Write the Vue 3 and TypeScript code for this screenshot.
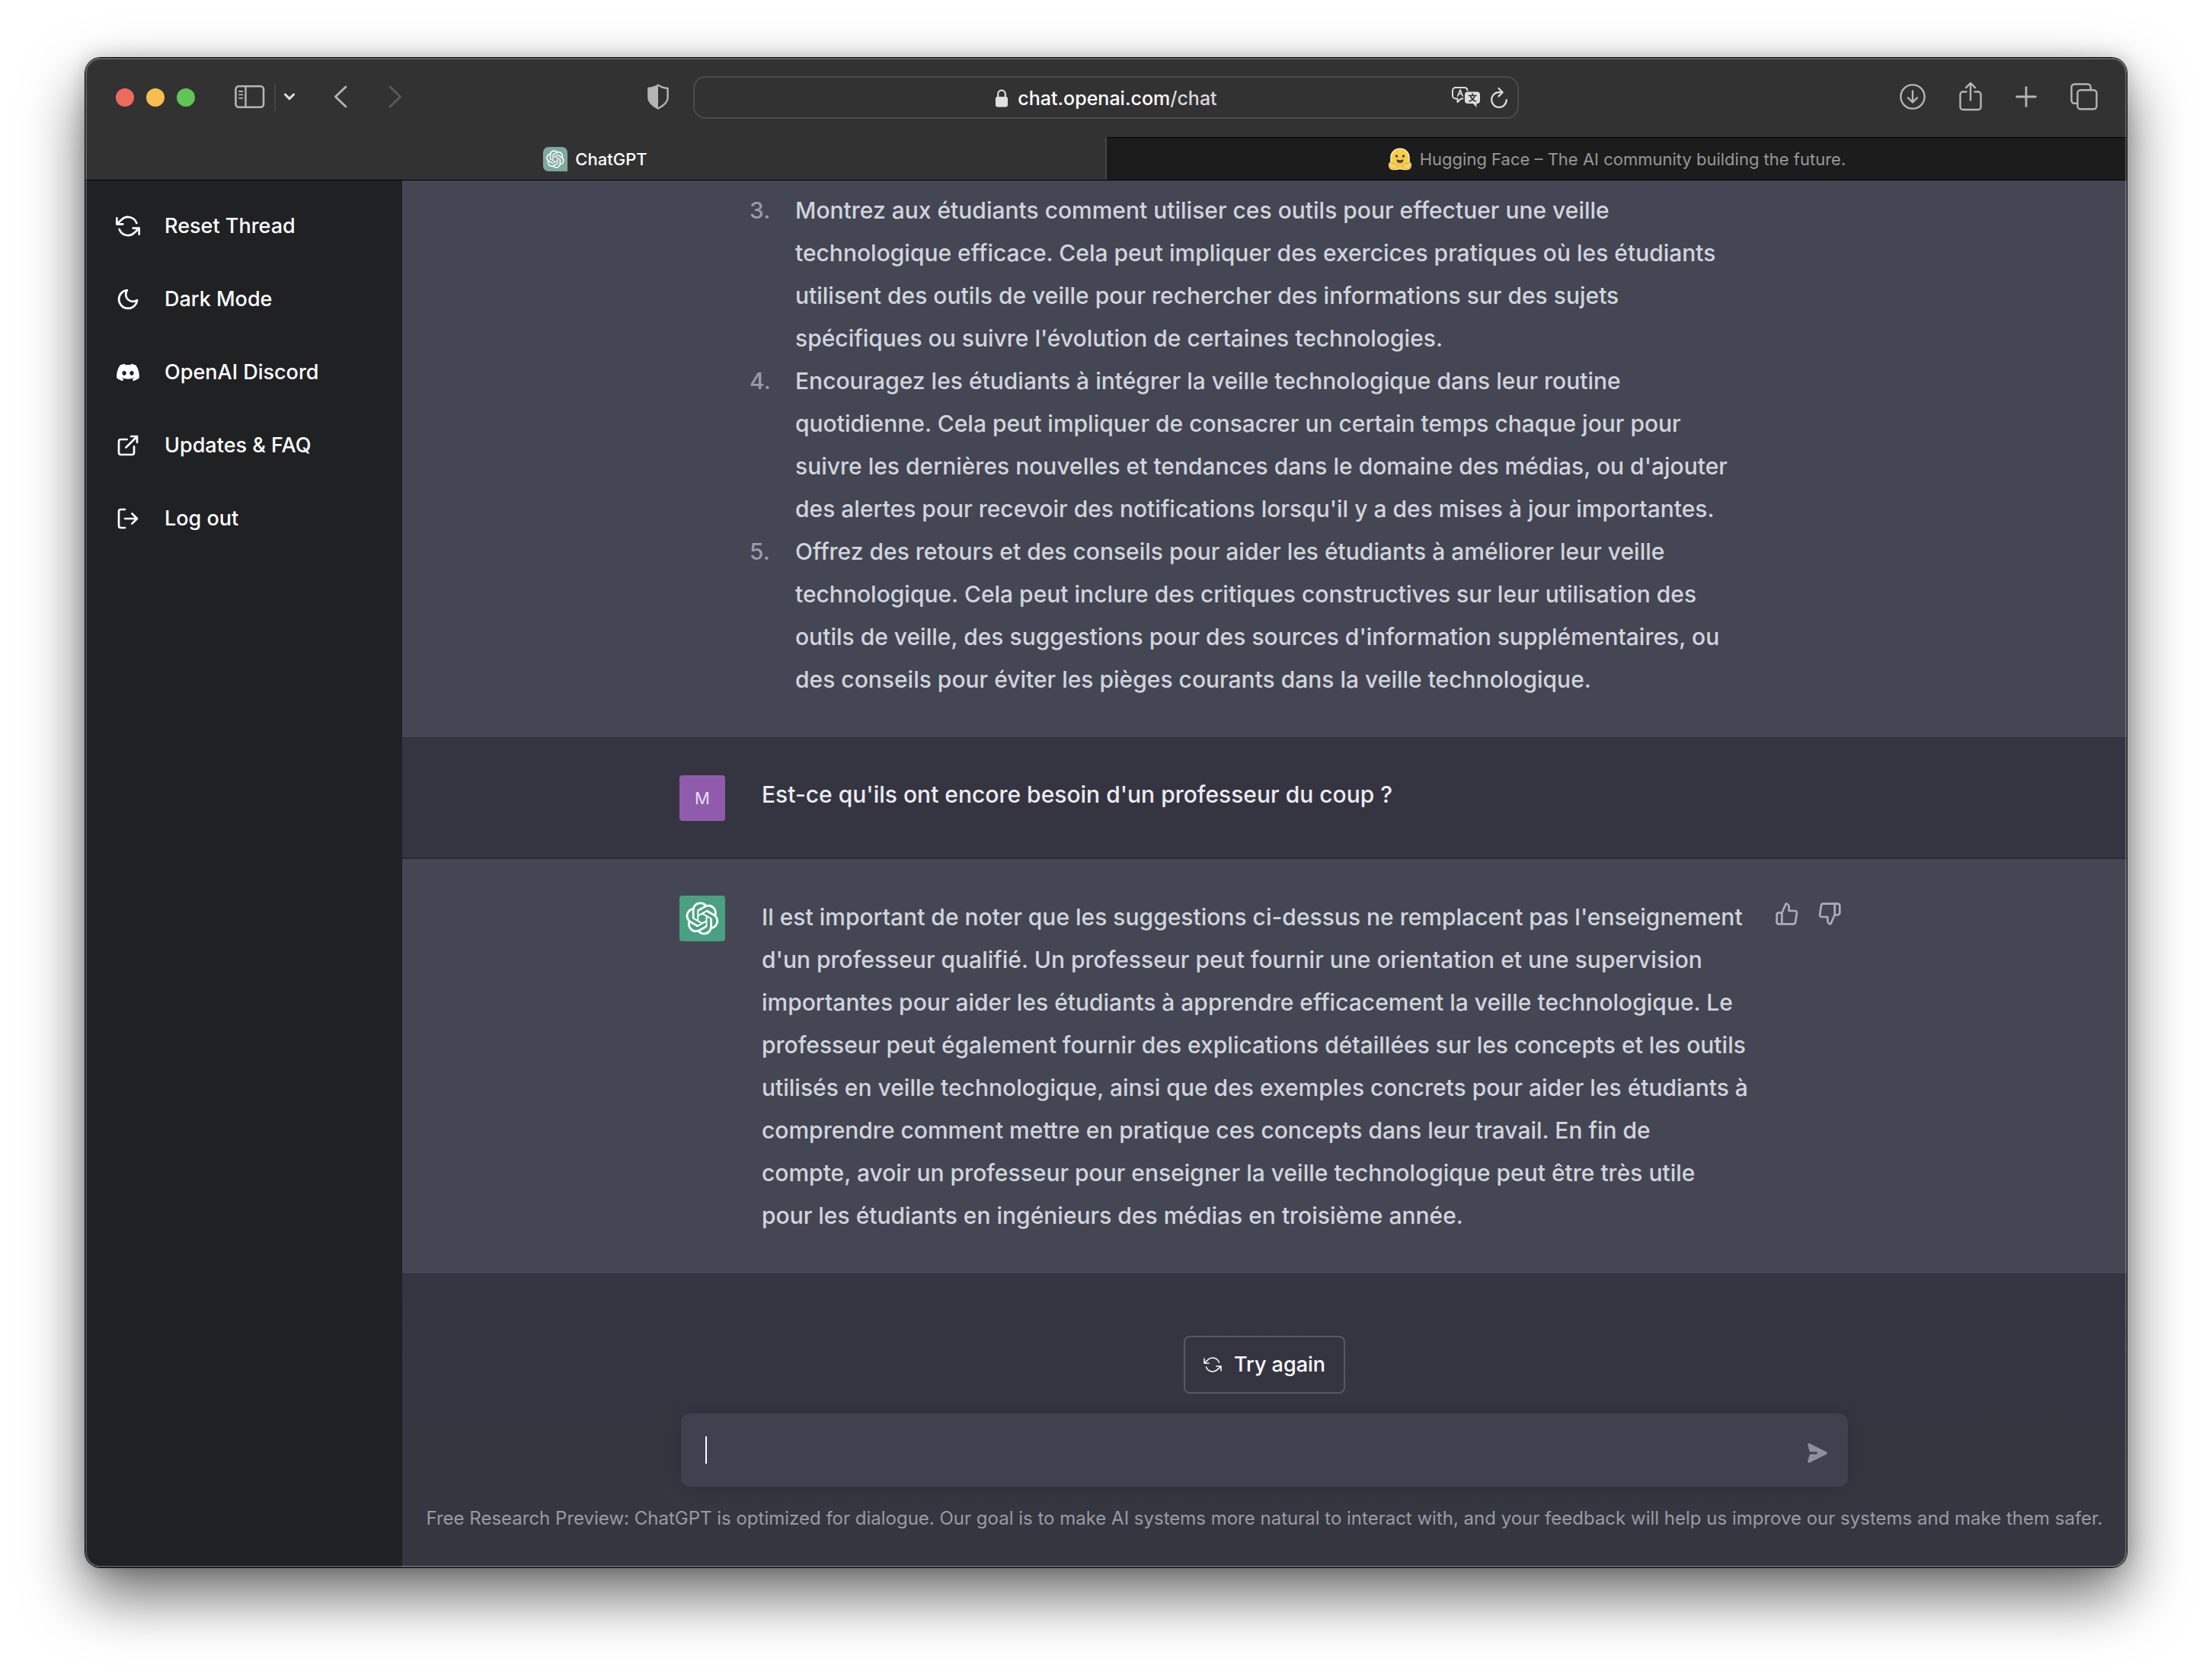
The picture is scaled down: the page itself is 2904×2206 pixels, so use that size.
<script setup lang="ts">
import { ref } from 'vue'

interface NavItem {
  label: string
  icon: 'refresh' | 'moon' | 'discord' | 'external' | 'logout'
}

interface Step {
  n: number
  lines: string[]
}

const draft = ref('')

const nav: NavItem[] = [
  { label: 'Reset Thread', icon: 'refresh' },
  { label: 'Dark Mode', icon: 'moon' },
  { label: 'OpenAI Discord', icon: 'discord' },
  { label: 'Updates & FAQ', icon: 'external' },
  { label: 'Log out', icon: 'logout' },
]

const steps: Step[] = [
  {
    n: 3,
    lines: [
      'Montrez aux étudiants comment utiliser ces outils pour effectuer une veille',
      'technologique efficace. Cela peut impliquer des exercices pratiques où les étudiants',
      'utilisent des outils de veille pour rechercher des informations sur des sujets',
      "spécifiques ou suivre l'évolution de certaines technologies.",
    ],
  },
  {
    n: 4,
    lines: [
      'Encouragez les étudiants à intégrer la veille technologique dans leur routine',
      'quotidienne. Cela peut impliquer de consacrer un certain temps chaque jour pour',
      "suivre les dernières nouvelles et tendances dans le domaine des médias, ou d'ajouter",
      "des alertes pour recevoir des notifications lorsqu'il y a des mises à jour importantes.",
    ],
  },
  {
    n: 5,
    lines: [
      'Offrez des retours et des conseils pour aider les étudiants à améliorer leur veille',
      'technologique. Cela peut inclure des critiques constructives sur leur utilisation des',
      "outils de veille, des suggestions pour des sources d'information supplémentaires, ou",
      'des conseils pour éviter les pièges courants dans la veille technologique.',
    ],
  },
]

const answer: string[] = [
  "Il est important de noter que les suggestions ci-dessus ne remplacent pas l'enseignement",
  "d'un professeur qualifié. Un professeur peut fournir une orientation et une supervision",
  'importantes pour aider les étudiants à apprendre efficacement la veille technologique. Le',
  'professeur peut également fournir des explications détaillées sur les concepts et les outils',
  'utilisés en veille technologique, ainsi que des exemples concrets pour aider les étudiants à',
  'comprendre comment mettre en pratique ces concepts dans leur travail. En fin de',
  'compte, avoir un professeur pour enseigner la veille technologique peut être très utile',
  'pour les étudiants en ingénieurs des médias en troisième année.',
]

const knot =
  'M37.532 16.87a9.963 9.963 0 0 0-.856-8.184 10.078 10.078 0 0 0-10.855-4.835A9.964 9.964 0 0 0 18.306.5a10.079 10.079 0 0 0-9.614 6.977 9.967 9.967 0 0 0-6.664 4.834 10.08 10.08 0 0 0 1.24 11.817 9.965 9.965 0 0 0 .856 8.185 10.079 10.079 0 0 0 10.855 4.835 9.965 9.965 0 0 0 7.516 3.35 10.078 10.078 0 0 0 9.617-6.981 9.967 9.967 0 0 0 6.663-4.834 10.079 10.079 0 0 0-1.243-11.813ZM22.498 37.886a7.474 7.474 0 0 1-4.799-1.735c.061-.033.168-.091.237-.134l7.964-4.6a1.294 1.294 0 0 0 .655-1.134V19.054l3.366 1.944a.12.12 0 0 1 .066.092v9.299a7.505 7.505 0 0 1-7.49 7.496ZM6.392 31.006a7.471 7.471 0 0 1-.894-5.023c.06.036.162.099.237.141l7.964 4.6a1.297 1.297 0 0 0 1.308 0l9.724-5.614v3.888a.12.12 0 0 1-.048.103l-8.051 4.649a7.504 7.504 0 0 1-10.24-2.744ZM4.297 13.62A7.469 7.469 0 0 1 8.2 10.333c0 .068-.004.19-.004.274v9.201a1.294 1.294 0 0 0 .654 1.132l9.723 5.614-3.366 1.944a.12.12 0 0 1-.114.01L7.04 23.856a7.504 7.504 0 0 1-2.743-10.237Zm27.658 6.437-9.724-5.615 3.367-1.943a.121.121 0 0 1 .113-.01l8.052 4.648a7.498 7.498 0 0 1-1.158 13.528v-9.476a1.293 1.293 0 0 0-.65-1.132Zm3.35-5.043c-.059-.037-.162-.099-.236-.141l-7.965-4.6a1.298 1.298 0 0 0-1.308 0l-9.723 5.614v-3.888a.12.12 0 0 1 .048-.103l8.05-4.645a7.497 7.497 0 0 1 11.135 7.763Zm-21.063 6.929-3.367-1.944a.12.12 0 0 1-.065-.092v-9.299a7.497 7.497 0 0 1 12.293-5.756 6.94 6.94 0 0 0-.236.134l-7.965 4.6a1.294 1.294 0 0 0-.654 1.132l-.006 11.225Zm1.829-3.943 4.33-2.501 4.332 2.5v5l-4.331 2.5-4.331-2.5V18Z'
</script>

<template>
  <div class="desktop">
    <div class="window">
      <header class="toolbar">
        <div class="tools-left">
          <div class="lights">
            <button class="light red" aria-label="Close"></button>
            <button class="light yellow" aria-label="Minimize"></button>
            <button class="light green" aria-label="Zoom"></button>
          </div>
          <div class="panel-group">
            <button class="tool" aria-label="Sidebar">
              <svg width="40" height="32" viewBox="0 0 40 32" fill="none" stroke="#b5b5b5">
                <rect x="1.5" y="2.2" width="36.5" height="27.6" rx="4" stroke-width="2.6" />
                <path d="M14.5 2v28" stroke-width="2.4" />
                <path d="M6 9h4.4M6 13.4h4.4M6 17.8h4.4" stroke-width="1.8" stroke-linecap="round" />
              </svg>
            </button>
            <span class="rule"></span>
            <button class="tool" aria-label="Tab groups">
              <svg width="16" height="12" viewBox="0 0 16 12" fill="none" stroke="#e2e2e2" stroke-width="3" stroke-linecap="round" stroke-linejoin="round">
                <path d="M2.4 3l5.6 5.6L13.6 3" />
              </svg>
            </button>
          </div>
          <div class="history">
            <button class="tool" aria-label="Back">
              <svg width="18" height="30" viewBox="0 0 18 30" fill="none" stroke="#b5b5b5" stroke-width="2.8" stroke-linecap="round" stroke-linejoin="round">
                <path d="M16 2L2.4 15 16 28" />
              </svg>
            </button>
            <button class="tool" aria-label="Forward">
              <svg width="18" height="30" viewBox="0 0 18 30" fill="none" stroke="#5a5a5a" stroke-width="2.8" stroke-linecap="round" stroke-linejoin="round">
                <path d="M2 2l13.6 13L2 28" />
              </svg>
            </button>
          </div>
          <button class="tool shield" aria-label="Privacy report">
            <svg width="28" height="34" viewBox="0 0 28 34">
              <path d="M14 1.6C11 4 6.5 5.3 1.4 6v12.5c0 6.500 6 10.500 12.600 14 6.600-3.500 12.600-7.500 12.600-14V6C21.500 5.300 17 4 14 1.600z" fill="none" stroke="#b5b5b5" stroke-width="2.4" stroke-linejoin="round" />
              <path d="M14 1.600C11 4 6.500 5.300 1.400 6v12.500c0 6.500 6 10.500 12.600 14z" fill="#b5b5b5" />
            </svg>
          </button>
        </div>
        <div class="address">
          <span></span>
          <div class="url">
            <svg width="18" height="24" viewBox="0 0 18 24">
              <path d="M4.200 11V6.500a4.800 4.800 0 0 1 9.600 0V11" fill="none" stroke="#e0e0e0" stroke-width="2.200" />
              <rect x="1" y="10" width="16" height="13.500" rx="2.400" fill="#e0e0e0" />
            </svg>
            <span>chat.openai.com<span class="path">/chat</span></span>
          </div>
          <div class="address-actions">
            <button class="tool" aria-label="Translate">
              <svg width="38" height="28" viewBox="0 0 38 28" fill="none" stroke="#dedede" stroke-width="2" stroke-linecap="round" stroke-linejoin="round">
                <path d="M14.500 15.500h-2.200L7.500 20v-4.500H5a4 4 0 0 1-4-4V5a4 4 0 0 1 4-4h12a4 4 0 0 1 3.500 3.500" />
                <path d="M7.800 12L11 4l3.200 8M8.800 9.500h4.400" stroke-width="1.700" />
                <path d="M21 6.500h12a4 4 0 0 1 4 4V18a4 4 0 0 1-4 4h-.5v5L28 22h-7a4 4 0 0 1-4-4v-7.500a4 4 0 0 1 4-4z" fill="#dedede" stroke="none" />
                <path d="M22.500 11.500h9.500M27.200 9v2M30 12c-1 3.500-3.500 6-7 7M24.500 12c1 3.500 3.500 6 7 7" stroke="#323232" stroke-width="1.700" />
              </svg>
            </button>
            <button class="tool" aria-label="Reload">
              <svg width="24" height="28" viewBox="0 0 24 28" fill="none" stroke="#dedede" stroke-width="2.200" stroke-linecap="round" stroke-linejoin="round">
                <path d="M15.500 7.200H12A9.800 9.800 0 1 0 21.800 17" />
                <path d="M11.500 2l5.200 5.200-5.200 5.200" />
              </svg>
            </button>
          </div>
        </div>
        <div class="tools-right">
          <button class="tool" aria-label="Downloads">
            <svg width="34" height="36" viewBox="0 0 34 36" fill="none" stroke="#b5b5b5" stroke-width="2.400" stroke-linecap="round" stroke-linejoin="round">
              <circle cx="17" cy="18" r="15.600" />
              <path d="M17 10.500v14.500M11 19.300l6 6 6-6" />
            </svg>
          </button>
          <button class="tool" aria-label="Share">
            <svg width="30" height="40" viewBox="0 0 30 40" fill="none" stroke="#b5b5b5" stroke-width="2.400" stroke-linecap="round" stroke-linejoin="round">
              <path d="M9.500 13.500H5a3.500 3.500 0 0 0-3.500 3.500v16.500A3.500 3.500 0 0 0 5 37h20a3.500 3.500 0 0 0 3.500-3.500V17a3.500 3.500 0 0 0-3.500-3.500h-4.500" />
              <path d="M15 24.500V2.500M9 8.200l6-6 6 6" />
            </svg>
          </button>
          <button class="tool" aria-label="New tab">
            <svg width="28" height="28" viewBox="0 0 28 28" fill="none" stroke="#b5b5b5" stroke-width="2.800" stroke-linecap="round">
              <path d="M14 1.600v24.800M1.600 14h24.800" />
            </svg>
          </button>
          <button class="tool" aria-label="Tab overview">
            <svg width="36" height="36" viewBox="0 0 36 36" fill="none" stroke="#b5b5b5" stroke-width="2.400" stroke-linejoin="round">
              <path d="M9.500 26.700H5.500a4 4 0 0 1-4-4V5.500a4 4 0 0 1 4-4h17.200a4 4 0 0 1 4 4v3.500" />
              <rect x="9.500" y="9.200" width="25" height="25" rx="4" />
            </svg>
          </button>
        </div>
      </header>

      <div class="tabs">
        <button class="tab active">
          <svg width="32" height="32" viewBox="0 0 32 32">
            <path d="M7 0h18a7 7 0 0 1 7 7v25H7a7 7 0 0 1-7-7V7a7 7 0 0 1 7-7z" fill="#80a99d" />
            <g transform="translate(4 4) scale(0.585)"><path :d="knot" fill="#fff" /></g>
          </svg>
          <span>ChatGPT</span>
        </button>
        <button class="tab">
          <svg width="32" height="32" viewBox="0 0 32 32">
            <path d="M16 1.500C8.500 1.500 3.300 7 3.300 14v5.500C1 21 .5 23.500 1.300 25.500c.2 3 3 4.800 6.700 4.800 3 0 5-.8 8-.8s5 .8 8 .8c3.700 0 6.500-1.800 6.700-4.800.8-2 .3-4.500-2-6V14C28.700 7 23.500 1.500 16 1.500z" fill="#fff" />
            <path d="M16 2.600C9 2.600 4.400 7.800 4.400 14.500v9.500c0 3 5 4.800 11.600 4.800S27.600 27 27.600 24v-9.500C27.600 7.800 23 2.600 16 2.600z" fill="#f6cf46" />
            <path d="M3 20.500c1.500-.8 2.600.6 3.600 1.900.3-1.400 1.500-1.400 2 0l1-.9c2.500 1.500 4.200 5 1.200 7-3 1.300-7 .9-8.500-2.500-.8-2 .2-2.600.2-2.800-.6-1.200-.2-2.300.5-2.700zM29 20.500c-1.500-.8-2.600.6-3.600 1.900-.3-1.400-1.500-1.400-2 0l-1-.9c-2.500 1.500-4.200 5-1.200 7 3 1.300 7 .9 8.500-2.500.8-2-.2-2.600-.2-2.800.6-1.200.2-2.300-.5-2.700z" fill="#f7d65a" stroke="#ee9d33" stroke-width="1" />
            <circle cx="11.500" cy="12" r="1.700" fill="#3a3b45" />
            <circle cx="20.500" cy="12" r="1.700" fill="#3a3b45" />
            <path d="M11.700 16.300c2.800 1.500 5.800 1.500 8.600 0 .3 3-1.500 5.200-4.300 5.200s-4.600-2.200-4.300-5.200z" fill="#3a3b45" />
            <path d="M13.500 20.300c1.500-1.200 3.500-1.200 5 0-.7.800-1.500 1.200-2.500 1.200s-1.800-.4-2.500-1.200z" fill="#ee4a4a" />
          </svg>
          <span>Hugging Face – The AI community building the future.</span>
        </button>
      </div>

      <div class="app">
        <nav class="sidebar">
          <a v-for="item in nav" :key="item.label" href="#" class="nav-item">
            <svg v-if="item.icon === 'discord'" width="32" height="32" viewBox="0.7 0.7 22.6 22.6" fill="#fff">
              <path d="M19.270 5.330C17.940 4.710 16.500 4.260 15 4a.09.09 0 0 0-.07.03c-.18.33-.39.76-.53 1.090a16.090 16.090 0 0 0-4.800 0c-.14-.34-.35-.76-.54-1.090c-.01-.02-.04-.03-.07-.03c-1.500.26-2.930.71-4.270 1.330c-.01 0-.02.01-.03.02c-2.720 4.070-3.470 8.030-3.100 11.950c0 .02.01.04.03.05c1.800 1.320 3.530 2.120 5.240 2.650c.03.01.06 0 .07-.02c.4-.55.76-1.130 1.070-1.740c.02-.04 0-.08-.04-.09c-.57-.22-1.110-.48-1.640-.78c-.04-.02-.04-.08-.01-.11c.11-.08.22-.17.33-.25c.02-.02.05-.02.07-.01c3.440 1.570 7.150 1.570 10.550 0c.02-.01.05-.01.07.01c.11.09.22.17.33.26c.04.03.04.09-.01.11c-.52.31-1.070.56-1.640.78c-.04.01-.05.06-.04.09c.32.61.68 1.190 1.070 1.740c.03.01.06.02.09.01c1.720-.53 3.450-1.330 5.250-2.650c.02-.01.03-.03.03-.05c.44-4.530-.73-8.460-3.100-11.950c-.01-.01-.02-.02-.04-.02M8.520 14.910c-1.030 0-1.890-.95-1.890-2.120s.84-2.120 1.890-2.120c1.060 0 1.900.96 1.890 2.120c0 1.170-.84 2.120-1.890 2.120m6.970 0c-1.030 0-1.890-.95-1.890-2.120s.84-2.120 1.890-2.120c1.060 0 1.900.96 1.890 2.120c0 1.170-.83 2.120-1.890 2.120" />
            </svg>
            <svg v-else width="32" height="32" viewBox="0 0 24 24" fill="none" stroke="#fff" stroke-width="2" stroke-linecap="round" stroke-linejoin="round">
              <path v-if="item.icon === 'refresh'" d="M1 4v6h6M23 20v-6h-6M20.490 9A9 9 0 0 0 5.640 5.640L1 10m22 4l-4.640 4.360A9 9 0 0 1 3.510 15" />
              <path v-else-if="item.icon === 'moon'" d="M21 12.790A9 9 0 1 1 11.210 3 7 7 0 0 0 21 12.790z" />
              <path v-else-if="item.icon === 'external'" d="M18 13v6a2 2 0 0 1-2 2H5a2 2 0 0 1-2-2V8a2 2 0 0 1 2-2h6M15 3h6v6M10 14L21 3" />
              <path v-else d="M9 21H5a2 2 0 0 1-2-2V5a2 2 0 0 1 2-2h4M16 17l5-5-5-5M21 12H9" />
            </svg>
            <span>{{ item.label }}</span>
          </a>
        </nav>

        <main class="chat">
          <section class="message bot first">
            <ol class="column steps">
              <li v-for="step in steps" :key="step.n" :value="step.n">
                <span class="marker">{{ step.n }}.</span>
                <div>
                  <span v-for="line in step.lines" :key="line" class="line">{{ line }}</span>
                </div>
              </li>
            </ol>
          </section>

          <section class="message user">
            <div class="column">
              <div class="avatar me">M</div>
              <p class="question">Est-ce qu'ils ont encore besoin d'un professeur du coup ?</p>
            </div>
          </section>

          <section class="message bot">
            <div class="column">
              <div class="avatar gpt">
                <svg width="44" height="44" viewBox="0 0 41 41"><path :d="knot" fill="#fff" /></svg>
              </div>
              <p class="answer">
                <span v-for="line in answer" :key="line" class="line">{{ line }}</span>
              </p>
              <div class="feedback">
                <button class="thumb" aria-label="Good answer">
                  <svg width="32" height="32" viewBox="0 0 24 24" fill="none" stroke="#acacbe" stroke-width="2" stroke-linecap="round" stroke-linejoin="round">
                    <path d="M14 9V5a3 3 0 0 0-3-3l-4 9v11h11.280a2 2 0 0 0 2-1.700l1.380-9a2 2 0 0 0-2-2.300zM7 22H4a2 2 0 0 1-2-2v-7a2 2 0 0 1 2-2h3" />
                  </svg>
                </button>
                <button class="thumb" aria-label="Bad answer">
                  <svg width="32" height="32" viewBox="0 0 24 24" fill="none" stroke="#acacbe" stroke-width="2" stroke-linecap="round" stroke-linejoin="round">
                    <path d="M10 15v4a3 3 0 0 0 3 3l4-9V2H5.720a2 2 0 0 0-2 1.700l-1.380 9a2 2 0 0 0 2 2.300zm7-13h2.670A2.310 2.310 0 0 1 22 4v7a2.310 2.310 0 0 1-2.330 2H17" />
                  </svg>
                </button>
              </div>
            </div>
          </section>

          <footer class="composer">
            <button class="retry">
              <svg width="24" height="24" viewBox="0 0 24 24" fill="none" stroke="#fff" stroke-width="1.500" stroke-linecap="round" stroke-linejoin="round">
                <path d="M1 4v6h6M23 20v-6h-6M20.490 9A9 9 0 0 0 5.640 5.640L1 10m22 4l-4.640 4.360A9 9 0 0 1 3.510 15" />
              </svg>
              <span>Try again</span>
            </button>
            <form class="prompt" @submit.prevent>
              <span class="caret"></span>
              <input v-model="draft" type="text" aria-label="Message" />
              <button class="send" type="submit" aria-label="Send">
                <svg width="32" height="32" viewBox="0 0 20 20" fill="#8e8ea0">
                  <path transform="rotate(90 10 10)" d="M10.894 2.553a1 1 0 00-1.788 0l-7 14a1 1 0 001.169 1.409l5-1.429A1 1 0 009 15.571V11a1 1 0 112 0v4.571a1 1 0 00.725.962l5 1.428a1 1 0 001.170-1.408l-7-14z" />
                </svg>
              </button>
            </form>
            <p class="notice">Free Research Preview: ChatGPT is optimized for dialogue. Our goal is to make AI systems more natural to interact with, and your feedback will help us improve our systems and make them safer.</p>
          </footer>
        </main>
      </div>
    </div>
  </div>
</template>

<style>
body {
  margin: 0;
  background: #fff;
}
</style>

<style scoped>
.desktop {
  box-sizing: border-box;
  min-height: 100vh;
  padding: 76px 112px 148px;
  display: flex;
  font-family: Inter, "Liberation Sans", sans-serif;
  color: #fff;
}

.desktop * {
  box-sizing: border-box;
}

button {
  margin: 0;
  padding: 0;
  border: 0;
  background: none;
  color: inherit;
  font: inherit;
}

svg {
  display: block;
  flex: none;
}

p {
  margin: 0;
}

.window {
  position: relative;
  flex: 1;
  min-width: 0;
  display: flex;
  flex-direction: column;
  border-radius: 20px;
  box-shadow:
    0 0 0 1px #000,
    0 0 24px rgba(0, 0, 0, 0.2),
    0 36px 80px rgba(0, 0, 0, 0.6);
}

/* light rim just inside the window edge */
.window::after {
  content: "";
  position: absolute;
  inset: 0;
  border-radius: 20px;
  box-shadow: inset 0 0 0 2px rgba(255, 255, 255, 0.22);
  pointer-events: none;
}

.toolbar {
  height: 104px;
  display: grid;
  grid-template-columns: 1fr minmax(0, 1084px) 1fr;
  align-items: center;
  background: #323232;
  border-radius: 20px 20px 0 0;
}

.tool {
  display: flex;
  align-items: center;
  padding-bottom: 2px;
}

.tools-left {
  display: flex;
  align-items: center;
  padding: 0 32px 0 40px;
}

.lights {
  display: flex;
  gap: 16px;
}

.light {
  width: 24px;
  height: 24px;
  border-radius: 50%;
}

.red {
  background: #ed6a5f;
}

.yellow {
  background: #f5bf4f;
}

.green {
  background: #61c555;
}

.panel-group {
  display: flex;
  align-items: center;
  margin-left: 52px;
}

.rule {
  width: 2px;
  height: 36px;
  margin: 0 10px 0 12px;
  background: #454545;
}

.history {
  display: flex;
  gap: 54px;
  margin-left: 50px;
}

.shield {
  margin-left: auto;
}

.address {
  height: 56px;
  display: grid;
  grid-template-columns: 1fr auto 1fr;
  align-items: center;
  padding: 2px 12px 0;
  border: 2px solid #4b4b4b;
  border-radius: 16px;
}

.url {
  display: flex;
  align-items: center;
  gap: 12px;
  font-size: 25px;
  line-height: 32px;
  font-weight: 500;
}

.path {
  color: #d9d9d9;
}

.address-actions {
  display: flex;
  align-items: center;
  justify-content: flex-end;
  gap: 12px;
}

.tools-right {
  display: flex;
  align-items: center;
  justify-content: flex-end;
  gap: 44px;
  padding-right: 38px;
}

.tabs {
  display: flex;
  height: 57px;
  border-bottom: 1px solid #000;
  background: #323232;
}

.tab {
  flex: 1;
  display: flex;
  align-items: center;
  justify-content: center;
  gap: 10px;
  border-top: 1px solid #000;
  background: #1c1c1c;
  color: #989898;
  font-size: 22px;
  line-height: 32px;
}

.tab.active {
  border-top-color: #323232;
  border-right: 2px solid #454545;
  background: #323232;
  color: #fff;
  font-weight: 500;
}

.app {
  flex: 1;
  display: flex;
}

.sidebar {
  flex: none;
  width: 416px;
  padding: 16px;
  display: flex;
  flex-direction: column;
  gap: 8px;
  background: #202123;
  border-radius: 0 0 0 20px;
}

.nav-item {
  height: 88px;
  padding: 0 24px;
  display: flex;
  align-items: center;
  gap: 32px;
  color: #fff;
  font-size: 27px;
  font-weight: 500;
  line-height: 40px;
  text-decoration: none;
}

.chat {
  flex: 1;
  min-width: 0;
  display: flex;
  flex-direction: column;
  background: linear-gradient(#343541 80%, #353740);
  border-radius: 0 0 20px 0;
}

.message {
  padding: 48px;
  border-bottom: 2px solid #2a2b32;
  font-size: 30px;
  font-weight: 500;
}

.first {
  padding-top: 11px;
}

.bot {
  background: #444654;
  border-color: #33343d;
  color: #d1d5db;
}

.user {
  color: #ececf1;
}

.column {
  max-width: 1536px;
  margin: 0 auto;
  display: flex;
  align-items: flex-start;
}

.steps {
  flex-direction: column;
  padding: 0 0 0 92px;
  list-style: none;
}

.steps li {
  display: flex;
}

.marker {
  width: 60px;
  color: #9a9ca9;
  line-height: 56px;
}

.line {
  display: block;
  line-height: 56px;
  white-space: nowrap;
}

.avatar {
  flex: none;
  width: 60px;
  height: 60px;
  margin-right: 48px;
  display: flex;
  align-items: center;
  justify-content: center;
  border-radius: 4px;
}

.me {
  background: #905bad;
  color: #eadff0;
  font-size: 22px;
  font-weight: 400;
}

.gpt {
  background: #4aa081;
}

.question {
  line-height: 50px;
}

.feedback {
  display: flex;
  gap: 8px;
  margin-left: auto;
  padding-right: 2px;
}

.thumb {
  padding: 8px;
}

.composer {
  flex: 1;
  display: flex;
  flex-direction: column;
  align-items: center;
  padding: 80px 32px 40px;
}

.retry {
  height: 76px;
  padding: 0 24px;
  display: flex;
  align-items: center;
  gap: 16px;
  border: 2px solid #565869;
  border-radius: 8px;
  background: #343541;
  font-size: 27px;
  font-weight: 500;
  line-height: 40px;
}

.prompt {
  width: 100%;
  max-width: 1532px;
  height: 96px;
  margin-top: 26px;
  padding: 0 24px 0 32px;
  display: flex;
  align-items: center;
  border-radius: 12px;
  background: #40414f;
  box-shadow: 0 0 24px rgba(0, 0, 0, 0.16);
}

.caret {
  width: 2px;
  height: 36px;
  background: #fff;
}

.send {
  padding-top: 8px;
}

.prompt input {
  flex: 1;
  min-width: 0;
  height: 48px;
  padding: 0;
  border: 0;
  outline: 0;
  background: none;
  color: #fff;
  font: inherit;
  font-size: 30px;
}

.notice {
  margin-top: 24px;
  color: #9b9ba1;
  font-size: 24px;
  line-height: 36px;
  white-space: nowrap;
}
</style>
